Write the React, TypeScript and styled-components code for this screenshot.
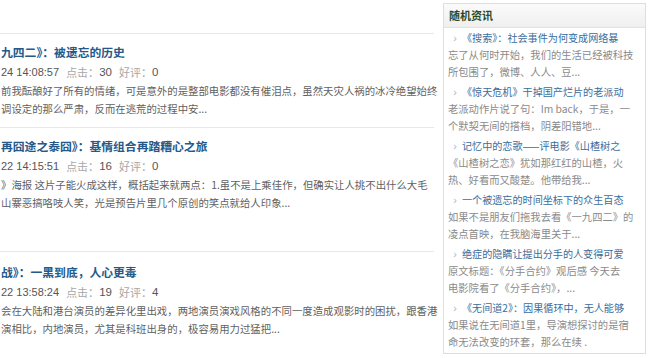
import React from 'react';
import styled, { createGlobalStyle } from 'styled-components';

const GlobalStyle = createGlobalStyle`
  html, body {
    margin: 0;
    padding: 0;
    background: #ffffff;
  }
  body {
    font-family: "Noto Sans CJK SC", "Liberation Sans", sans-serif;
    width: 650px;
    height: 358px;
    overflow: hidden;
  }
`;

interface Article {
  title: string;
  date: string;
  clicks: number;
  likes: number;
  lines: string[];
  extra?: boolean;
}

interface News {
  title: string;
  lines: string[];
}

const articles: Article[] = [
  {
    title: '九四二》：被遗忘的历史',
    date: '24 14:08:57',
    clicks: 30,
    likes: 0,
    lines: [
      '前我酝酿好了所有的情绪，可是意外的是整部电影都没有催泪点，虽然天灾人祸的冰冷绝望始终',
      '调设定的那么严肃，反而在逃荒的过程中安...'
    ]
  },
  {
    title: '再囧途之泰囧》：基情组合再踏糟心之旅',
    date: '22 14:15:51',
    clicks: 16,
    likes: 0,
    lines: [
      '》海报 这片子能火成这样，概括起来就两点：1.虽不是上乘佳作，但确实让人挑不出什么大毛',
      '山寨恶搞咯吱人笑，光是预告片里几个原创的笑点就给人印象...'
    ],
    extra: true
  },
  {
    title: '战》：一黑到底，人心更毒',
    date: '22 13:58:24',
    clicks: 19,
    likes: 4,
    lines: [
      '会在大陆和港台演员的差异化里出戏，两地演员演戏风格的不同一度造成观影时的困扰，跟香港',
      '演相比，内地演员，尤其是科班出身的，极容易用力过猛把...'
    ]
  }
];

const news: News[] = [
  {
    title: '《搜索》：社会事件为何变成网络暴',
    lines: ['忘了从何时开始，我们的生活已经被科技', '所包围了，微博、人人、豆...']
  },
  {
    title: '《惊天危机》干掉国产烂片的老派动',
    lines: ['老派动作片说了句：Im back，于是，一', '个默契无间的搭档，阴差阳错地...']
  },
  {
    title: '记忆中的恋歌——评电影《山楂树之',
    lines: ['《山楂树之恋》犹如那红红的山楂，火', '热、好看而又酸楚。他带给我...']
  },
  {
    title: '一个被遗忘的时间坐标下的众生百态',
    lines: ['如果不是朋友们拖我去看《一九四二》的', '凌点首映，在我脑海里关于...']
  },
  {
    title: '绝症的隐瞒让提出分手的人变得可爱',
    lines: ['原文标题：《分手合约》观后感 今天去', '电影院看了《分手合约》，...']
  },
  {
    title: '《无间道2》：因果循环中，无人能够',
    lines: ['如果说在无间道1里，导演想探讨的是宿', '命无法改变的环套，那么在续 .']
  }
];

const Page = styled.div`
  display: flex;
  align-items: flex-start;
  gap: 9px;
  width: 650px;
  height: 358px;
`;

const Main = styled.div`
  width: 434px;
  padding-top: 33px;
  flex-shrink: 0;
`;

const Item = styled.div<{ $extra?: boolean }>`
  border-top: 1px solid #e8e8e8;
  padding: 8px 0 ${props => (props.$extra ? '39px' : '9px')} 1px;

  &:last-child {
    padding-top: 10px;
  }
`;

const Title = styled.h3`
  margin: 0;
  height: 20px;
  font-size: 11.8px;
  line-height: 20px;
  font-weight: 700;
  color: #24598a;
  white-space: nowrap;
`;

const Meta = styled.div`
  display: flex;
  align-items: center;
  height: 20px;
  font-family: "Liberation Sans", "Noto Sans CJK SC", sans-serif;
  font-size: 11px;
  color: #555555;
  white-space: nowrap;
`;

const Label = styled.span`
  color: #a8a8a8;
  margin-left: 7px;
`;

const Num = styled.span`
  color: #555555;
  font-size: 11.5px;
`;

const Desc = styled.div`
  height: 18px;
  font-size: 10.4px;
  line-height: 18px;
  color: #5f5f5f;
  white-space: nowrap;
`;

const Sidebar = styled.div`
  width: 201px;
  margin-top: 3px;
  border: 1px solid #dedede;
  flex-shrink: 0;
`;

const SideHeader = styled.div`
  height: 23px;
  line-height: 23px;
  padding-left: 5px;
  background: linear-gradient(#fbfbfb, #efefef);
  border-bottom: 1px solid #e2e2e2;
  font-size: 11px;
  font-weight: 700;
  color: #2e4a1f;
`;

const SideList = styled.ul`
  list-style: none;
  margin: 0;
  padding: 1px 0 3px 4px;
`;

const SideItem = styled.li`
  margin-bottom: 3px;

  &:last-child {
    margin-bottom: 0;
  }
`;

const SideTitle = styled.div`
  display: flex;
  align-items: center;
  height: 17px;
  font-size: 10.1px;
  color: #3a6d9c;
  white-space: nowrap;
`;

const Bullet = styled.span`
  width: 14px;
  flex-shrink: 0;
  text-align: center;
  color: #b5b5b5;
  font-family: "Liberation Sans", sans-serif;
  font-size: 11px;
`;

const SideDesc = styled.div`
  height: 17px;
  font-size: 10.3px;
  line-height: 17px;
  color: #8a8a8a;
  white-space: nowrap;
`;

export default function App() {
  return (
    <>
      <GlobalStyle />
      <Page>
        <Main>
          {articles.map(a => (
            <Item key={a.date} $extra={a.extra}>
              <Title>{a.title}</Title>
              <Meta>
                {a.date}
                <Label>点击：</Label>
                <Num>{a.clicks}</Num>
                <Label>好评：</Label>
                <Num>{a.likes}</Num>
              </Meta>
              {a.lines.map(l => (
                <Desc key={l}>{l}</Desc>
              ))}
            </Item>
          ))}
        </Main>
        <Sidebar>
          <SideHeader>随机资讯</SideHeader>
          <SideList>
            {news.map(n => (
              <SideItem key={n.title}>
                <SideTitle>
                  <Bullet>›</Bullet>
                  {n.title}
                </SideTitle>
                {n.lines.map(l => (
                  <SideDesc key={l}>{l}</SideDesc>
                ))}
              </SideItem>
            ))}
          </SideList>
        </Sidebar>
      </Page>
    </>
  );
}
